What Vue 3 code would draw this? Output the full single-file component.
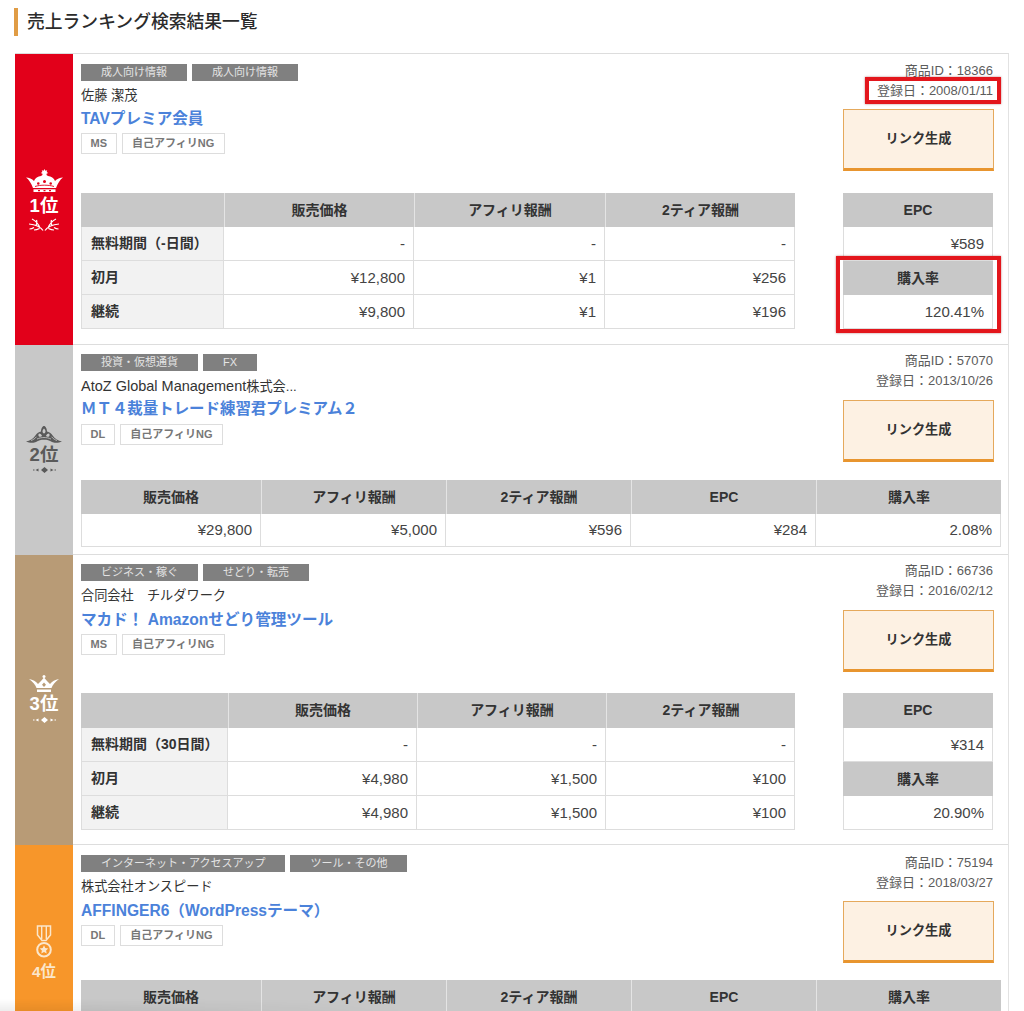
<script setup>
const cards = [
  { rank: 1, cls: 'r1', tags: ['成人向け情報', '成人向け情報'], seller: '佐藤 潔茂', title: 'TAVプレミア会員', kind: 'MS', id: '18366', date: '2008/01/11', marked: true,
    wide: 'w1', rows: [['無料期間（-日間）', '-', '-', '-'], ['初月', '¥12,800', '¥1', '¥256'], ['継続', '¥9,800', '¥1', '¥196']], epc: '¥589', rate: '120.41%' },
  { rank: 2, cls: 'r2', tags: ['投資・仮想通貨', 'FX'], latin: 'AtoZ Global Management', seller: '株式会...', title: 'ＭＴ４裁量トレード練習君プレミアム２', kind: 'DL', id: '57070', date: '2013/10/26',
    flat: ['¥29,800', '¥5,000', '¥596', '¥284', '2.08%'] },
  { rank: 3, cls: 'r3', tags: ['ビジネス・稼ぐ', 'せどり・転売'], seller: '合同会社　チルダワーク', title: 'マカド！ Amazonせどり管理ツール', kind: 'MS', id: '66736', date: '2016/02/12',
    wide: 'w3', rows: [['無料期間（30日間）', '-', '-', '-'], ['初月', '¥4,980', '¥1,500', '¥100'], ['継続', '¥4,980', '¥1,500', '¥100']], epc: '¥314', rate: '20.90%' },
  { rank: 4, cls: 'r4', tags: ['インターネット・アクセスアップ', 'ツール・その他'], seller: '株式会社オンスピード', title: 'AFFINGER6（WordPressテーマ）', kind: 'DL', id: '75194', date: '2018/03/27',
    flat: [] }
]
const flatHead = ['販売価格', 'アフィリ報酬', '2ティア報酬', 'EPC', '購入率']
const gridHead = ['', '販売価格', 'アフィリ報酬', '2ティア報酬']
</script>

<template>
  <div class="page">
    <h1 class="heading">売上ランキング検索結果一覧</h1>
    <div class="list">
      <section v-for="c in cards" :key="c.rank" class="card" :class="[c.cls, { 'is-flat': c.flat }]">
        <div class="rank">
          <svg v-if="c.rank === 1" class="ic ic1" viewBox="0 0 37 24" fill="#fff">
            <path d="M18.500 0l.9 1.700 1.800-.4-.5 1.800 1.500 1-1.700.7.100 1.400h-4.200l.1-1.400-1.700-.7 1.500-1-.5-1.800 1.800.4z" />
            <path d="M0 8.500C3 8.500 6 9.800 8 12c1-2.800 4-4.800 7-5 1-.9 2-1.300 3.500-1.300S21 6.100 22 7c3 .2 6 2.200 7 5 2-2.200 5-3.500 8-3.500-3 2.200-5 5.500-7 10.500H7C5 14 3 10.700 0 8.500z" />
            <path d="M7.500 20.300h22V23h-22z" />
            <path d="M11 14.500a1.300 1.300 0 1 1 2.600 0 1.300 1.300 0 0 1-2.600 0zM17 12.500a1.500 1.500 0 1 1 3 0 1.500 1.500 0 0 1-3 0zM23.400 14.500a1.300 1.300 0 1 1 2.600 0 1.300 1.300 0 0 1-2.600 0z" fill="#e2001a" />
            <path d="M9 17.500c3-1 6-1.300 9.500-1.300s6.500.3 9.500 1.300" fill="none" stroke="#e2001a" stroke-width=".9" />
            <path d="M12 21h2v1.300h-2zM17.500 21h2v1.300h-2zM23 21h2v1.300h-2z" fill="#e2001a" />
          </svg>
          <svg v-else-if="c.rank === 2" class="ic ic2" viewBox="0 0 36 18" fill="#5a5a5a">
            <path d="M0 16.500C4 15.800 7 14 9 11c2-3 4-4 6-4.500C15 3.500 16.500 1 18 1s3 2.500 3 5.500c2 .5 4 1.500 6 4.500 2 3 5 4.800 9 5.500-3 1.500-8 1.800-10 .5-2.500-1.600-5-2.200-8-2.200s-5.500.6-8 2.200c-2 1.300-7 1-10-.5z" />
            <path d="M18 3.500c-1 .8-1.500 2-1.500 3 0 1.200 1 2 1.500 2s1.500-.8 1.500-2c0-1-.5-2.200-1.500-3zM13 8.500c-.8 1-.8 2.300 0 3 1 .7 2.500.2 3-.8-.8-1.400-1.800-2.100-3-2.200zM23 8.500c.8 1 .8 2.300 0 3-1 .7-2.500.2-3-.8.800-1.400 1.800-2.100 3-2.200z" fill="#c8c8c8" />
            <path d="M5 15.500c2-.6 4-1.900 5.500-3.800M31 15.500c-2-.6-4-1.900-5.500-3.800M11 14c4.500-2 9.500-2 14 0" fill="none" stroke="#c8c8c8" stroke-width=".8" />
          </svg>
          <svg v-else-if="c.rank === 3" class="ic ic3" viewBox="0 0 30 17" fill="#fff">
            <circle cx="15" cy="1.500" r="1.500" />
            <path d="M0 4c4 .5 7 2.500 9 5l3-3 3-3.500L18 6l3 3c2-2.500 5-4.500 9-5-4 3-6.500 6-7.500 9h-15C6.500 10 4 7 0 4z" />
            <path d="M8 14.500h14V17H8z" />
            <path d="M15 7.500l2 2.200-2 2.200-2-2.200z" fill="#b89b76" />
          </svg>
          <svg v-else class="ic ic4" viewBox="0 0 16 33" fill="none" stroke="#fbe7cc">
            <path d="M1.500 1h13v9L10 15.500H6L1.500 10z" stroke-width="1.500" />
            <path d="M5.700 1v13M10.300 1v13" stroke-width="1.400" />
            <circle cx="8" cy="24.700" r="6.800" stroke-width="2" />
            <path d="M8 20.300l1.300 2.700 3 .4-2.200 2 .6 3-2.700-1.400-2.700 1.400.6-3-2.200-2 3-.4z" fill="#fbe7cc" stroke="none" />
          </svg>
          <div class="place">{{ c.rank }}位</div>
          <svg v-if="c.rank === 1" class="orn laurel" viewBox="0 0 30 13" fill="none" stroke="#fff" stroke-width="1.200">
            <path d="M14 12.500C11 8.500 6.500 6.500 0 6M11 10C9.500 6 7 3 3 1M7 7.500C8 5.500 8 3.500 7.500 2M5 9.500C3.500 10.500 2 11 .5 11M10.500 10.500C8.500 11.500 7 12 5 12" />
            <path d="M16 12.500C19 8.500 23.500 6.500 30 6M19 10c1.500-4 4-7 8-9M23 7.500c-1-2-1-4-.5-5.500M25 9.500c1.500 1 3 1.500 4.500 1.500M19.500 10.500c2 1 3.500 1.500 5.500 1.500" />
          </svg>
          <svg v-else-if="c.rank < 4" class="orn dia" viewBox="0 0 23 6" :fill="c.rank === 2 ? '#5a5a5a' : '#fff'">
            <path d="M11.500 0l3.500 3-3.500 3L8 3zM5.500 1.400v3.200L2.500 3zM17.500 1.400v3.200l3-1.600zM0 2.400h1.500v1.200H0zM21.500 2.400H23v1.200h-1.500z" />
          </svg>
        </div>

        <div class="body">
          <div class="top">
            <div class="info">
              <div class="tags"><span v-for="t in c.tags" :key="t" class="tag">{{ t }}</span></div>
              <div class="seller"><span v-if="c.latin" class="latin">{{ c.latin }}</span>{{ c.seller }}</div>
              <a class="title">{{ c.title }}</a>
              <div class="badges">
                <span class="badge">{{ c.kind }}</span>
                <span class="badge">自己アフィリNG</span>
              </div>
            </div>
            <div class="meta">
              <div class="line">商品ID：{{ c.id }}</div>
              <div class="line datel">登録日：{{ c.date }}<i v-if="c.marked" class="mark mark-date"></i></div>
              <button class="gen" type="button">リンク生成</button>
            </div>
          </div>

          <div v-if="c.flat" class="flat">
            <div v-for="h in flatHead" :key="h" class="th">{{ h }}</div>
            <div v-for="(v, i) in c.flat" :key="i" class="td">{{ v }}</div>
          </div>

          <div v-else class="tables">
            <div class="grid" :class="c.wide">
              <div v-for="(h, i) in gridHead" :key="i" class="th">{{ h }}</div>
              <template v-for="r in c.rows" :key="r[0]">
                <div class="rowh">{{ r[0] }}</div>
                <div v-for="(v, i) in r.slice(1)" :key="i" class="td">{{ v }}</div>
              </template>
            </div>
            <div class="side">
              <div class="th">EPC</div>
              <div class="td">{{ c.epc }}</div>
              <div class="rate">
                <div class="th rate-th">購入率</div>
                <div class="td">{{ c.rate }}</div>
                <i v-if="c.marked" class="mark mark-rate"></i>
              </div>
            </div>
          </div>
        </div>
      </section>
    </div>
    <div class="fade"></div>
  </div>
</template>

<style>
html, body { margin: 0; background: #fff; }
</style>

<style scoped>
.page {
  position: relative;
  height: 1011px;
  overflow: hidden;
  padding: 8px 15px 0 14px;
  box-sizing: border-box;
  background: #fff;
  color: #333;
  font-family: "Liberation Sans", "Noto Sans CJK JP", sans-serif;
}
.heading {
  margin: 0 0 17px;
  height: 28px;
  line-height: 28px;
  padding-left: 9px;
  border-left: 4px solid #e09c45;
  font-size: 17.8px;
  font-weight: 500;
  color: #2b2b2b;
}
.list {
  margin-left: 1px;
  border-top: 1px solid #ddd;
  border-right: 1px solid #e2e2e2;
}
.card { display: flex; }
.rank {
  width: 58px;
  flex: none;
  display: flex;
  flex-direction: column;
  align-items: center;
  justify-content: center;
  box-sizing: border-box;
  color: #fff;
}
.r1 .rank { background: #e2001a; }
.r2 .rank { background: #c8c8c8; color: #5a5a5a; padding-bottom: 3px; }
.r3 .rank { background: #b89b76; padding-bottom: 2px; }
.r4 .rank { background: #f7962a; padding-top: 7px; color: #fbe7cc; }
.r4 { min-height: 210px; }
.ic { display: block; }
.ic1 { width: 37px; height: 24px; }
.ic2 { width: 36px; height: 18px; }
.ic3 { width: 30px; height: 17px; }
.ic4 { width: 16px; height: 33px; }
.place {
  font-size: 18.5px;
  font-weight: 700;
  line-height: 22px;
}
.r1 .place { margin-top: 2px; }
.r2 .place { margin-top: 1px; }
.r3 .place { margin-top: 1px; }
.r4 .place { font-size: 15.4px; line-height: 20px; margin-top: 4px; }
.orn { display: block; }
.laurel { width: 30px; height: 13px; margin-top: 1px; }
.dia { width: 23px; height: 6px; margin-top: 1px; }
.r3 .dia { margin-top: 2px; }
.body {
  flex: 1;
  min-width: 0;
  padding: 9px 8px 0;
  border-bottom: 1px solid #ddd;
}
.r1 .body, .r4 .body { padding-top: 10px; }
.top {
  display: flex;
  justify-content: space-between;
  height: 129px;
}
.r2 .top { height: 126px; }
.r4 .top { height: 125px; }
.tags { display: flex; gap: 5px; }
.tag {
  height: 17px;
  line-height: 17px;
  padding: 0 20px;
  background: #808080;
  color: #e4e4e4;
  font-size: 11px;
  white-space: nowrap;
}
.seller {
  height: 20px;
  line-height: 20px;
  margin-top: 5px;
  font-size: 13.2px;
  color: #333;
  white-space: nowrap;
}
.latin { font-size: 14.5px; }
.title {
  display: block;
  height: 22px;
  line-height: 22px;
  margin-top: 2px;
  font-size: 15.6px;
  font-weight: 700;
  color: #4b82da;
  white-space: nowrap;
}
.r2 .title { font-size: 15.45px; }
.r3 .title, .r4 .title { margin-top: 3px; }
.badges { display: flex; gap: 5px; margin-top: 3px; }
.r2 .badges { margin-top: 4px; }
.badge {
  height: 21px;
  line-height: 19px;
  box-sizing: border-box;
  padding: 0 8.500px;
  border: 1px solid #ddd;
  font-size: 11px;
  font-weight: 700;
  color: #777;
}
.badge + .badge { padding: 0 9.500px; }
.meta {
  width: 151px;
  margin-right: 6px;
  margin-top: -3px;
  text-align: right;
  font-size: 13px;
  color: #5c5c5c;
}
.r4 .meta { margin-top: -2px; }
.line { height: 20px; line-height: 20px; padding-right: 1px; white-space: nowrap; }
.datel { position: relative; }
.gen {
  display: block;
  width: 151px;
  height: 62px;
  margin-top: 8px;
  padding: 0 0 3px;
  background: #fdf1e3;
  border: 1px solid #e5a95c;
  border-bottom: 3px solid #e8952f;
  font: 700 13.200px "Liberation Sans", "Noto Sans CJK JP", sans-serif;
  color: #333;
}
.r2 .gen, .r3 .gen { margin-top: 9px; }
.mark {
  position: absolute;
  border: 4px solid #e3161c;
  box-shadow: 0 0 2px rgba(120, 0, 0, .5);
  pointer-events: none;
}
.mark-date { top: -4px; bottom: -3px; left: 22px; right: -7px; }
.mark-rate { top: -5px; bottom: -4px; left: -7px; right: -8px; }
.th {
  height: 34px;
  line-height: 34px;
  box-sizing: border-box;
  background: #c8c8c8;
  text-align: center;
  font-size: 14px;
  font-weight: 700;
  color: #333;
}
.r3 .grid .th, .r3 .side > .th { height: 35px; }
.td {
  height: 34px;
  line-height: 33px;
  box-sizing: border-box;
  padding-right: 8px;
  background: #fff;
  border-right: 1px solid #ddd;
  border-bottom: 1px solid #ddd;
  text-align: right;
  font-size: 15px;
  color: #444;
}
.flat .td { height: 33px; line-height: 32px; }
.rowh {
  height: 34px;
  line-height: 33px;
  box-sizing: border-box;
  padding-left: 9px;
  background: #f2f2f2;
  border-left: 1px solid #ddd;
  border-right: 1px solid #ddd;
  border-bottom: 1px solid #ddd;
  font-size: 14px;
  font-weight: 700;
  color: #333;
  white-space: nowrap;
}
.tables { display: flex; justify-content: space-between; padding-bottom: 15px; }
.r3 .tables { padding-bottom: 14px; }
.grid { display: grid; width: 714px; }
.w1 { grid-template-columns: 143px 190px 191px 190px; }
.w3 { grid-template-columns: 147px 189px 189px 189px; }
.grid .th + .th, .flat .th + .th { border-left: 1px solid #e4e4e4; }
.side { width: 150px; margin-right: 7px; }
.side .td { border-left: 1px solid #ddd; }
.rate { position: relative; }
.flat {
  display: grid;
  grid-template-columns: 180px 185px 185px 185px 185px;
  padding-bottom: 7px;
}
.flat .td:nth-child(6) { border-left: 1px solid #ddd; }
.fade {
  position: absolute;
  left: 0;
  right: 0;
  bottom: 0;
  height: 12px;
  background: linear-gradient(to top, rgba(0, 0, 0, .07), rgba(0, 0, 0, 0));
  -webkit-mask-image: linear-gradient(to right, #000, transparent 40%);
  mask-image: linear-gradient(to right, #000, transparent 40%);
}
</style>
